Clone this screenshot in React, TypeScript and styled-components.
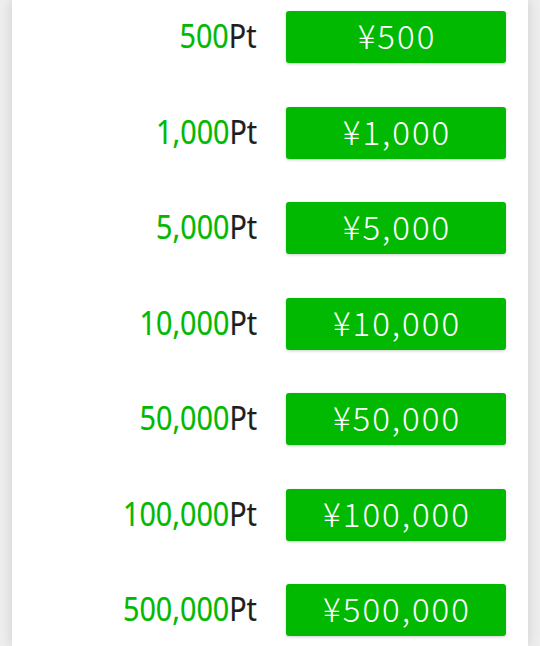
import React from "react";
import styled, { createGlobalStyle } from "styled-components";

const Global = createGlobalStyle`
  html, body { margin: 0; padding: 0; }
  body { background: #eeeeee; font-family: "Noto Sans", sans-serif; }
`;

const Panel = styled.div`
  margin: 0 12px;
  min-height: 646px;
  background: #ffffff;
  box-shadow: 0 0 12px rgba(0, 0, 0, 0.14);
  padding-top: 11px;
  box-sizing: border-box;
  display: flex;
  flex-direction: column;
  gap: 43.5px;
`;

const Row = styled.div`
  display: flex;
  align-items: center;
  justify-content: flex-end;
  gap: 29px;
  padding-right: 22px;
  height: 52px;
`;

const Label = styled.div`
  display: inline-block;
  font-family: "Noto Sans", sans-serif;
  font-size: 33px;
  font-weight: 400;
  color: #1e1e1e;
  -webkit-text-stroke: 0.2px currentColor;
  transform: scaleX(0.87);
  transform-origin: right center;
  white-space: nowrap;
  margin-top: -3px;
`;

const Amount = styled.span`
  color: #00b900;
`;

const BuyButton = styled.button`
  width: 220px;
  height: 52px;
  border: none;
  border-radius: 3px;
  background: #00b900;
  color: #ffffff;
  font-family: "Noto Sans CJK JP", sans-serif;
  font-size: 33px;
  font-weight: 300;
  letter-spacing: 2px;
  box-shadow: 0 1px 3px rgba(0, 0, 0, 0.2);
  display: flex;
  align-items: center;
  justify-content: center;
  padding: 0 0 4px 2px;
  box-sizing: border-box;
`;

const items = ["500", "1,000", "5,000", "10,000", "50,000", "100,000", "500,000"];

export default function App() {
  return (
    <>
      <Global />
      <Panel>
        {items.map((v) => (
          <Row key={v}>
            <Label>
              <Amount>{v}</Amount>Pt
            </Label>
            <BuyButton>¥{v}</BuyButton>
          </Row>
        ))}
      </Panel>
    </>
  );
}
